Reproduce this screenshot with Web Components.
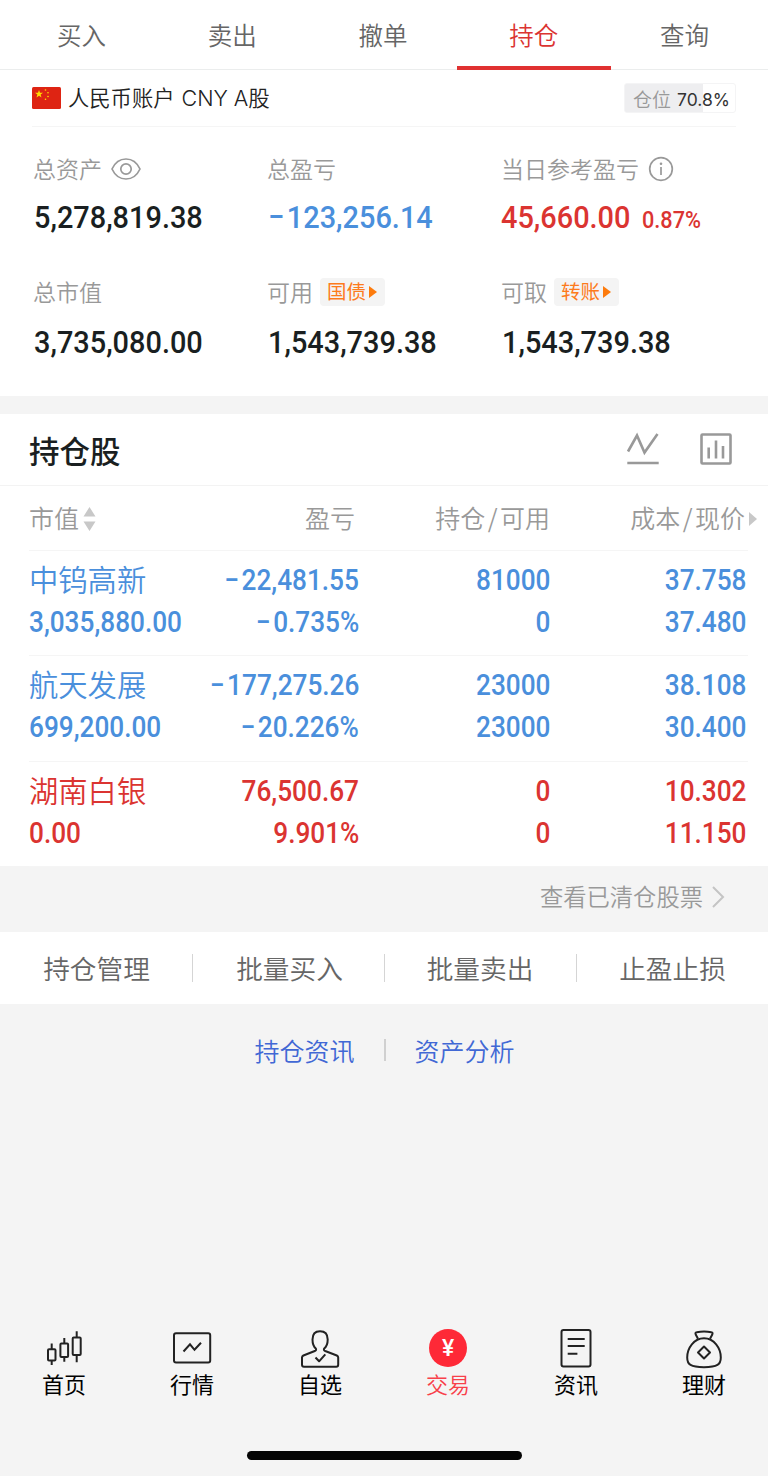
<!DOCTYPE html>
<html lang="zh-CN">
<head>
<meta charset="UTF-8">
<title>持仓</title>
<style>
  body {
    margin: 0;
    width: 768px;
    height: 1476px;
    overflow: hidden;
    background: #f4f4f4;
    font-family: "Noto Sans CJK SC", sans-serif;
    --red: #db3431;
    --blue: #4a8fdc;
    --ink: #1a1f21;
    --muted: #999;
    --line: #f5f5f5;
  }
</style>
</head>
<body>
<trade-page>
  <tab-bar slot="tabs">
    <tab-item>买入</tab-item>
    <tab-item>卖出</tab-item>
    <tab-item>撤单</tab-item>
    <tab-item active>持仓</tab-item>
    <tab-item>查询</tab-item>
  </tab-bar>

  <account-bar percent="70.8">人民币账户 <span>CNY A股</span></account-bar>

  <stat-grid>
    <stat-cell value="5,278,819.38" icon="eye">总资产</stat-cell>
    <stat-cell value="−123,256.14" tone="blue">总盈亏</stat-cell>
    <stat-cell value="45,660.00" extra="0.87%" tone="red" icon="info">当日参考盈亏</stat-cell>
    <stat-cell value="3,735,080.00" low>总市值</stat-cell>
    <stat-cell value="1,543,739.38" link="国债" low>可用</stat-cell>
    <stat-cell value="1,543,739.38" link="转账" low>可取</stat-cell>
  </stat-grid>

  <section-head>持仓股</section-head>
  <holding-head></holding-head>
  <holding-row name="中钨高新" market="3,035,880.00" profit="−22,481.55" rate="−0.735%" hold="81000" usable="0" cost="37.758" price="37.480" tone="blue"></holding-row>
  <holding-row name="航天发展" market="699,200.00" profit="−177,275.26" rate="−20.226%" hold="23000" usable="23000" cost="38.108" price="30.400" tone="blue"></holding-row>
  <holding-row name="湖南白银" market="0.00" profit="76,500.67" rate="9.901%" hold="0" usable="0" cost="10.302" price="11.150" tone="red"></holding-row>

  <cleared-link slot="bottom">查看已清仓股票</cleared-link>
  <action-bar slot="bottom">
    <span>持仓管理</span>
    <span>批量买入</span>
    <span>批量卖出</span>
    <span>止盈止损</span>
  </action-bar>
  <link-pair slot="bottom">
    <span slot="left">持仓资讯</span>
    <span slot="right">资产分析</span>
  </link-pair>

  <bottom-nav slot="nav">
    <nav-item icon="home">首页</nav-item>
    <nav-item icon="market">行情</nav-item>
    <nav-item icon="user">自选</nav-item>
    <nav-item icon="trade" active>交易</nav-item>
    <nav-item icon="news">资讯</nav-item>
    <nav-item icon="wealth">理财</nav-item>
  </bottom-nav>
</trade-page>

<script>
const ICONS = {
  eye: `<svg width="30" height="24" viewBox="0 0 30 24" fill="none" stroke="#999" stroke-width="1.7">
    <path d="M1 12C4 5.500 9 2 15 2s11 3.500 14 10c-3 6.500-8 10-14 10S4 18.500 1 12z"/><circle cx="15" cy="12" r="5.200"/></svg>`,
  info: `<svg width="26" height="26" viewBox="0 0 26 26" fill="none" stroke="#999" stroke-width="1.7">
    <circle cx="13" cy="13" r="11.300"/><path d="M13 11v8"/><circle cx="13" cy="7.700" r="1.300" fill="#999" stroke="none"/></svg>`,
  line: `<svg width="34" height="34" viewBox="0 0 34 34" fill="none" stroke="#999" stroke-width="2.6">
    <path d="M2 19.500L11 3.500l7.500 17L31.500 2M1.300 31h31.400"/></svg>`,
  bars: `<svg width="34" height="34" viewBox="0 0 34 34" fill="none" stroke="#999" stroke-width="2.6">
    <rect x="2.500" y="2.500" width="29" height="29" rx="1"/><path d="M9.700 15.500v11M17 8.500v18M24 14v12.500"/></svg>`,
  home: `<svg width="48" height="44" viewBox="0 0 48 44" fill="none" stroke="#222" stroke-width="2">
    <rect x="8" y="23.200" width="7.500" height="11.300" rx="1"/><path d="M11.700 17.500v5.500M11.700 34.500v4.500"/>
    <rect x="20.400" y="17.400" width="7.700" height="13.600" rx="1"/><path d="M24.300 12v5.500M24.300 31v4.700"/>
    <rect x="32.700" y="11.400" width="8" height="17.600" rx="1"/><path d="M36.700 5.300v6M36.700 29v7.200"/></svg>`,
  market: `<svg width="48" height="44" viewBox="0 0 48 44" fill="none" stroke="#222" stroke-width="2">
    <rect x="6" y="7.300" width="36.200" height="29.300" rx="2"/><path d="M15.500 25.500l6.500-7.200 4.500 5.500 6.500-7"/></svg>`,
  user: `<svg width="48" height="44" viewBox="0 0 48 44" fill="none" stroke="#222" stroke-width="2" stroke-linejoin="round">
    <path d="M19.800 22.500C17.400 20.500 16.500 17.500 16.500 13.500C16.500 8 19 5.200 24 5.200s7.700 2.800 7.700 8.300c0 4-1 7-3.500 9c-.7 1.500-.2 2 1 2.500l11.600 4.500c1 .5 1.400 1.100 1.400 2v7.200q0 2-2 2H8q-2 0-2-2v-7.200c0-.9.400-1.500 1.400-2L18.800 25c1.200-.5 1.700-1 1-2.500z"/>
    <path d="M19.500 31.500l3.600 3.800 6.200-7"/></svg>`,
  trade: `<svg width="48" height="44" viewBox="0 0 48 44">
    <circle cx="24" cy="22" r="19" fill="#fe2937"/>
    <text x="24" y="30" fill="#fff" font-family="Roboto, sans-serif" font-size="23" font-weight="500" text-anchor="middle">¥</text></svg>`,
  news: `<svg width="48" height="44" viewBox="0 0 48 44" fill="none" stroke="#222" stroke-width="2">
    <rect x="9.500" y="4" width="29" height="36.500" rx="2"/><path d="M15.700 13h17M15.700 20h17M15.700 27.700h9.700"/></svg>`,
  wealth: `<svg width="48" height="44" viewBox="0 0 48 44" fill="none" stroke="#222" stroke-width="2" stroke-linejoin="round">
    <path d="M18 12.800L15.700 8.500q-.8-2 1-2.300c5-1 9.700-1 14.700 0q1.700.3.900 2.300L30 12.800"/>
    <path d="M24 12.300C14 12.300 7.200 22 7.200 31.500c0 7 3.300 9.700 16.800 9.700s16.800-2.700 16.800-9.700C40.800 22 34 12.300 24 12.300z"/>
    <path d="M24 20.500l6 6-6 6-6-6z"/></svg>`,
};

// the minus sign gets its own spacing
const amount = (text) => text.replace("−", "<i>−</i>");

// shared shadow root setup
class BaseElement extends HTMLElement {
  constructor() {
    super();
    this.attachShadow({ mode: "open" });
  }

  connectedCallback() {
    this.shadowRoot.innerHTML = this.template();
  }

  attr(name) {
    return this.getAttribute(name) || "";
  }
}

class TradePage extends BaseElement {
  template() {
    return /*HTML*/ `
      <style>
        :host { display: flex; flex-direction: column; height: 1476px; }
        main { background: #fff; height: 796px; }
        .tabs { background: #fff; }
        .bottom { flex: 1; }
      </style>
      <div class="tabs"><slot name="tabs"></slot></div>
      <main><slot></slot></main>
      <div class="bottom"><slot name="bottom"></slot></div>
      <slot name="nav"></slot>
    `;
  }
}

class TabBar extends BaseElement {
  template() {
    return /*HTML*/ `
      <style>
        :host {
          display: flex;
          box-sizing: border-box;
          height: 70px;
          padding: 0 8px 0 6px;
          border-bottom: 1px solid #ebeded;
        }
      </style>
      <slot></slot>
    `;
  }
}

class TabItem extends BaseElement {
  template() {
    return /*HTML*/ `
      <style>
        :host {
          position: relative;
          flex: 1;
          height: 70px;
          text-align: center;
          line-height: 69px;
          font-size: 24.500px;
          font-weight: 350;
          color: #666;
        }
        :host([active]) { color: var(--red); }
        :host([active])::after {
          content: "";
          position: absolute;
          left: -1px;
          right: -2px;
          bottom: 0;
          height: 4px;
          background: #e03131;
        }
      </style>
      <slot></slot>
    `;
  }
}

class AccountBar extends BaseElement {
  template() {
    const percent = this.attr("percent");
    return /*HTML*/ `
      <style>
        :host {
          display: flex;
          align-items: center;
          box-sizing: border-box;
          height: 57px;
          margin: 0 32px;
          border-bottom: 1px solid var(--line);
          font-family: Inter, "Noto Sans CJK SC", sans-serif;
        }
        svg { display: block; margin-right: 7px; }
        .name { font-size: 21.300px; font-weight: 350; color: #222; flex: 1; padding-bottom: 3px; }
        ::slotted(span) { font-size: 21.500px; margin-left: 1px; }
        .badge {
          display: flex;
          align-items: center;
          box-sizing: border-box;
          width: 112px;
          height: 30px;
          padding-left: 8px;
          border: 1px solid #f4f4f5;
          border-radius: 3px;
          background: linear-gradient(to right, #eeeef0 ${percent}%, #fff ${percent}%);
          font-size: 19px;
          font-weight: 350;
          color: var(--muted);
        }
        .badge b { font-size: 17.500px; font-weight: 400; color: #333; margin-left: 6px; padding-top: 2px; }
      </style>
      <svg width="29" height="22" viewBox="0 0 29 22">
        <rect width="29" height="22" rx="1.500" fill="#de2413"/>
        <g fill="#ffde00">
          <path d="M7 3l1 2.800h3L8.600 7.500l.9 2.900L7 8.700l-2.500 1.700.9-2.900L3 5.800h3z"/>
          <circle cx="13.500" cy="3" r=".8"/><circle cx="16" cy="5.700" r=".8"/>
          <circle cx="16" cy="9.500" r=".8"/><circle cx="13.500" cy="12.200" r=".8"/>
        </g>
      </svg>
      <div class="name"><slot></slot></div>
      <div class="badge">仓位<b>${percent}%</b></div>
    `;
  }
}

class StatGrid extends BaseElement {
  template() {
    return /*HTML*/ `
      <style>
        :host {
          display: grid;
          grid-template-columns: repeat(3, 234px);
          grid-template-rows: 123px 123px;
          box-sizing: border-box;
          height: 287px;
          padding: 24px 0 0 33px;
          border-bottom: 18px solid #f4f4f4;
        }
      </style>
      <slot></slot>
    `;
  }
}

// condensed figures used for every amount
class NumText extends BaseElement {
  template() {
    return /*HTML*/ `
      <style>
        :host {
          display: inline-block;
          font-family: Roboto, sans-serif;
          font-weight: 500;
          white-space: nowrap;
          transform: scaleX(.903);
          transform-origin: left center;
        }
        :host([right]) { transform-origin: right center; }
        ::slotted(i) { font-style: normal; margin-right: .09em; }
      </style>
      <slot></slot>
    `;
  }
}

class StatCell extends BaseElement {
  template() {
    const link = this.attr("link");
    const extra = this.attr("extra");
    const tone = this.attr("tone") || "ink";
    return /*HTML*/ `
      <style>
        :host { display: block; }
        .label {
          display: flex;
          align-items: center;
          height: 34px;
          font-size: 23px;
          font-weight: 350;
          color: var(--muted);
        }
        svg { display: block; margin: 2px 0 0 9px; }
        .value {
          display: flex;
          align-items: baseline;
          margin-top: 10px;
          padding-left: 1px;
          height: 44px;
          line-height: 44px;
          font-size: 32px;
          color: var(--${tone});
        }
        :host([low]) .value { margin-top: 12px; }
        :host([tone="red"]) .value { padding-left: 0; }
        .extra { font-size: 24px; margin-left: -2px; }
        .link {
          display: flex;
          align-items: center;
          box-sizing: border-box;
          width: 65px;
          height: 28px;
          margin: 1px 0 0 7px;
          padding: 0 0 2px 7px;
          border-radius: 4px;
          background: #f4f4f4;
          color: #fd7b1c;
          font-size: 19.500px;
          font-weight: 400;
        }
        .link::after {
          content: "";
          margin: 2px 0 0 3px;
          border: 6px solid transparent;
          border-left: 8px solid #fd7b0c;
          border-right: 0;
        }
      </style>
      <div class="label"><slot></slot>${ICONS[this.attr("icon")] || ""}${link ? `<span class="link">${link}</span>` : ""}</div>
      <div class="value"><num-text>${amount(this.attr("value"))}</num-text>${extra ? `<num-text class="extra">${extra}</num-text>` : ""}</div>
    `;
  }
}

class SectionHead extends BaseElement {
  template() {
    return /*HTML*/ `
      <style>
        :host {
          display: flex;
          align-items: center;
          box-sizing: border-box;
          height: 72px;
          padding: 0 35px 0 29px;
          border-bottom: 1px solid #f3f3f3;
          font-size: 30.500px;
          font-weight: 500;
          color: var(--ink);
        }
        .title { flex: 1; }
        svg { display: block; margin: -1px 1px 0 38px; }
        svg:last-child { margin-right: 0; }
      </style>
      <div class="title"><slot></slot></div>
      ${ICONS.line}${ICONS.bars}
    `;
  }
}

class HoldingHead extends BaseElement {
  template() {
    return /*HTML*/ `
      <style>
        :host {
          display: grid;
          grid-template-columns: 170px 160px 191px 198px;
          box-sizing: border-box;
          width: 719px;
          height: 65px;
          margin-left: 29px;
          border-bottom: 1px solid var(--line);
          line-height: 63px;
          font-size: 25px;
          font-weight: 350;
          color: #999;
        }
        div { display: flex; justify-content: flex-end; white-space: nowrap; }
        .first { justify-content: flex-start; }
        .col2 { padding-right: 5px; margin-right: -1px; }
        i { font-style: normal; margin: 0 2.500px; }
        svg { display: block; fill: #c8c8c8; }
        .sort { margin: 21px 0 0 4px; }
        .more { margin: 26px -9px 0 4px; }
      </style>
      <div class="first">市值<svg class="sort" width="13" height="24" viewBox="0 0 13 24"><path d="M6.500 0l6 9.500H.5zM6.500 24l6-9.500H.5z"/></svg></div>
      <div class="col2">盈亏</div>
      <div>持仓<i>/</i>可用</div>
      <div>成本<i>/</i>现价<svg class="more" width="8" height="14" viewBox="0 0 8 14"><path d="M0 0l8 7-8 7z"/></svg></div>
    `;
  }
}

class HoldingRow extends BaseElement {
  template() {
    const pair = (top, bottom) =>
      `<div><num-text right>${amount(this.attr(top))}</num-text><num-text right>${amount(this.attr(bottom))}</num-text></div>`;
    return /*HTML*/ `
      <style>
        :host {
          display: grid;
          grid-template-columns: 170px 160px 191px 196px;
          box-sizing: border-box;
          width: 719px;
          height: 105.300px;
          margin-left: 29px;
          padding-top: 8px;
          border-bottom: 1px solid var(--line);
          line-height: 42px;
          font-size: 29px;
          color: var(--${this.attr("tone")});
        }
        div { display: flex; flex-direction: column; align-items: flex-end; height: 84px; }
        .first { align-items: flex-start; }
        .name { height: 42px; line-height: 38px; font-size: 29.300px; font-weight: 350; white-space: nowrap; }
      </style>
      <div class="first">
        <span class="name">${this.attr("name")}</span>
        <num-text>${this.attr("market")}</num-text>
      </div>
      ${pair("profit", "rate")}
      ${pair("hold", "usable")}
      ${pair("cost", "price")}
    `;
  }
}

class ClearedLink extends BaseElement {
  template() {
    return /*HTML*/ `
      <style>
        :host {
          display: flex;
          align-items: center;
          justify-content: flex-end;
          box-sizing: border-box;
          height: 66px;
          padding: 0 43px 6px 0;
          font-size: 23.300px;
          font-weight: 350;
          color: var(--muted);
        }
        svg { margin: 1px 0 0 8px; }
      </style>
      <slot></slot>
      <svg width="14" height="22" viewBox="0 0 14 22" fill="none" stroke="#c4c4c4" stroke-width="2"><path d="M2 1l10 10L2 21"/></svg>
    `;
  }
}

class ActionBar extends BaseElement {
  template() {
    return /*HTML*/ `
      <style>
        :host {
          display: grid;
          grid-template-columns: 193px 192px 192px 191px;
          height: 72px;
          background: #fff;
          line-height: 72px;
          font-size: 26.700px;
          font-weight: 350;
          color: #666;
          text-align: center;
        }
        ::slotted(span) {
          background: linear-gradient(#d5d5d5, #d5d5d5) right center / 1px 28px no-repeat;
        }
        ::slotted(span:nth-child(2)) { padding-left: 1px; }
        ::slotted(span:nth-child(3)) { padding-right: 2px; }
        ::slotted(span:last-child) { background: none; }
      </style>
      <slot></slot>
    `;
  }
}

class LinkPair extends BaseElement {
  template() {
    return /*HTML*/ `
      <style>
        :host {
          display: flex;
          align-items: center;
          justify-content: center;
          gap: 29px;
          height: 92px;
          padding-left: 1px;
          font-size: 25px;
          font-weight: 350;
          color: #4168d5;
        }
        i { width: 2px; height: 22px; background: #d0d0d0; }
      </style>
      <slot name="left"></slot><i></i><slot name="right"></slot>
    `;
  }
}

class BottomNav extends BaseElement {
  template() {
    return /*HTML*/ `
      <style>
        :host { display: block; height: 150px; }
        .items { display: flex; height: 125px; }
        .indicator { width: 275px; height: 9px; margin: 0 auto; border-radius: 5px; background: #050505; }
      </style>
      <div class="items"><slot></slot></div>
      <div class="indicator"></div>
    `;
  }
}

class NavItem extends BaseElement {
  template() {
    return /*HTML*/ `
      <style>
        :host {
          display: flex;
          flex: 1;
          flex-direction: column;
          align-items: center;
          font-size: 22px;
          line-height: 26px;
          color: #000;
        }
        :host([active]) { color: #f8404a; font-weight: 350; }
        svg { display: block; }
      </style>
      ${ICONS[this.attr("icon")]}
      <slot></slot>
    `;
  }
}

customElements.define("trade-page", TradePage);
customElements.define("tab-bar", TabBar);
customElements.define("tab-item", TabItem);
customElements.define("account-bar", AccountBar);
customElements.define("stat-grid", StatGrid);
customElements.define("num-text", NumText);
customElements.define("stat-cell", StatCell);
customElements.define("section-head", SectionHead);
customElements.define("holding-head", HoldingHead);
customElements.define("holding-row", HoldingRow);
customElements.define("cleared-link", ClearedLink);
customElements.define("action-bar", ActionBar);
customElements.define("link-pair", LinkPair);
customElements.define("bottom-nav", BottomNav);
customElements.define("nav-item", NavItem);
</script>
</body>
</html>
